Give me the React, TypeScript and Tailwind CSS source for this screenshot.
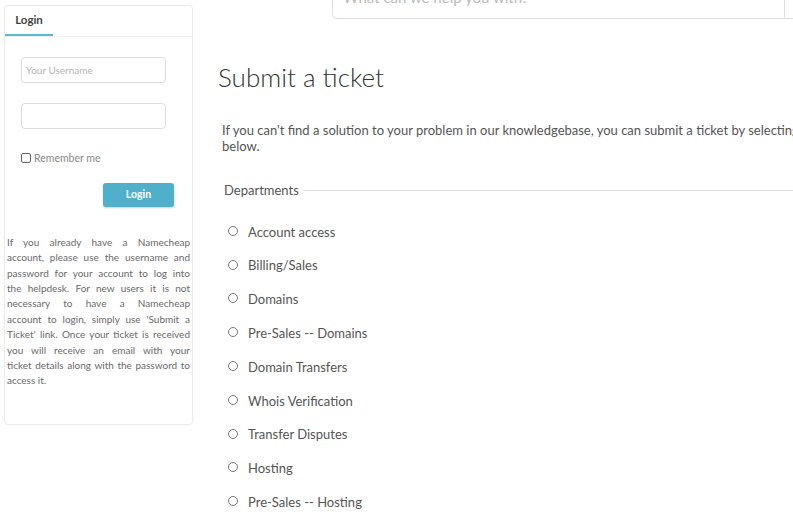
import React from "react";

const departments = [
  "Account access",
  "Billing/Sales",
  "Domains",
  "Pre-Sales -- Domains",
  "Domain Transfers",
  "Whois Verification",
  "Transfer Disputes",
  "Hosting",
  "Pre-Sales -- Hosting",
];

// lines are kept as in the picture so the justified block wraps the same way
const helpLines = [
  "If you already have a Namecheap",
  "account, please use the username and",
  "password for your account to log into",
  "the helpdesk. For new users it is not",
  "necessary to have a Namecheap",
  "account to login, simply use 'Submit a",
  "Ticket' link. Once your ticket is received",
  "you will receive an email with your",
  "ticket details along with the password to",
  "access it.",
];

function LoginCard() {
  return (
    <div className="w-[189px] h-[420px] border border-[#ebebeb] rounded-[4px] shadow-[0_0_2px_rgba(0,0,0,0.04)] flex flex-col">
      <div className="h-[31px] border-b border-[#f0f0f0] flex items-end">
        <div className="w-[48px] h-[31px] border-b-2 border-[#5bb9cf] flex items-center justify-center text-[11.5px] font-bold text-[#444] pt-[1px]">
          Login
        </div>
      </div>

      <div className="pl-[16px] pt-[20px] flex flex-col">
        <div className="w-[145px] h-[26px] border border-[#dcdcdc] rounded-[4px] flex items-center px-[4px] text-[10px] text-[#b5b5b5]">
          Your Username
        </div>
        <div className="w-[145px] h-[26px] border border-[#dcdcdc] rounded-[4px] mt-[20px]" />
        <div className="flex items-center mt-[20px]">
          <span className="w-[10px] h-[10px] border border-[#666] rounded-[2px]" />
          <span className="ml-[3px] text-[10.5px] text-[#888] mt-[2px]">Remember me</span>
        </div>
        <div className="flex mt-[16px] pl-[82px]">
          <div className="w-[71px] h-[24px] rounded-[3px] bg-[#4eb0ca] shadow-[0_1px_2px_rgba(0,0,0,0.2)] flex items-center justify-center text-[10.5px] font-bold text-white">
            Login
          </div>
        </div>
      </div>

      <div className="mt-[28px] pl-[2px] pr-[2px] text-[10px] leading-[15.4px] text-[#6a6a6a]">
        {helpLines.map((line, i) => (
          <div
            key={i}
            className={i < helpLines.length - 1 ? "text-justify [text-align-last:justify]" : ""}
          >
            {line}
          </div>
        ))}
      </div>
    </div>
  );
}

function Radio({ label }: { label: string }) {
  return (
    <div className="h-[33.8px] flex items-center">
      <span className="ml-[4px] w-[10px] h-[10px] rounded-full border border-[#777] mb-[3px]" />
      <span className="ml-[10px] text-[13px] text-[#555]">{label}</span>
    </div>
  );
}

export default function App() {
  return (
    <div
      className="w-[793px] h-[514px] overflow-hidden bg-white flex"
      style={{ fontFamily: "Lato, 'Open Sans', sans-serif" }}
    >
      <div className="w-[212px] shrink-0 pl-[4px] pt-[5px]">
        <LoginCard />
      </div>

      <div className="w-[800px] shrink-0 flex flex-col">
        {/* search bar, clipped by the top of the window */}
        <div className="ml-[120px] -mt-[21px] h-[40px] flex">
          <div className="w-[453px] h-[40px] border border-[#dedede] rounded-l-[5px] flex items-start pt-[6px] px-[10px] text-[15px] text-[#bbb]">
            What can we help you with?
          </div>
          <div className="w-[40px] h-[40px] border-y border-r border-[#dedede]" />
        </div>

        <div className="ml-[6px] mt-[43px] text-[26px] font-light text-[#333] leading-[30px]">
          Submit a ticket
        </div>
        <div className="mt-[11px] h-px bg-[#eeeeee]" />

        <div className="ml-[10px] mt-[19px] w-[765px] text-[13px] leading-[16px] text-[#555]">
          If you can't find a solution to your problem in our knowledgebase, you can submit a ticket by selecting the appropriate department below.
        </div>

        <div className="ml-[12px] mt-[27px] flex items-center">
          <span className="text-[13px] text-[#555]">Departments</span>
          <span className="ml-[4px] flex-1 h-px bg-[#e2e2e2]" />
        </div>

        <div className="ml-[12px] mt-[15px] flex flex-col">
          {departments.map((d) => (
            <Radio key={d} label={d} />
          ))}
        </div>
      </div>
    </div>
  );
}
